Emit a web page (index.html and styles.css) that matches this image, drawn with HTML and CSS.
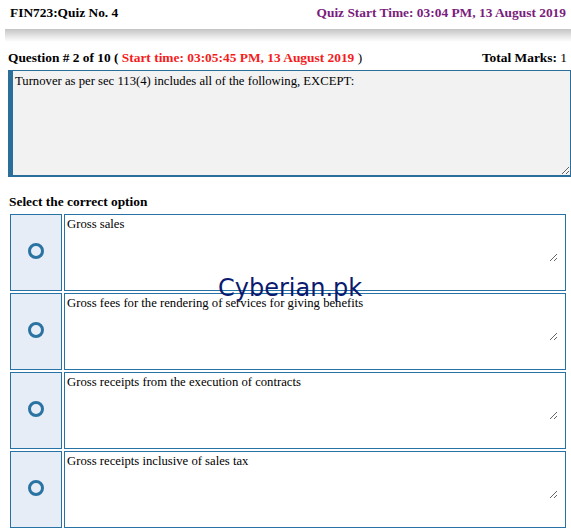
FILE: index.html
```html
<!DOCTYPE html>
<html>
<head>
<meta charset="utf-8">
<link rel="stylesheet" href="styles.css">
</head>
<body>
<header class="top">
  <div class="course">FIN723:Quiz No. 4</div>
  <div class="quiz-time">Quiz Start Time: 03:04 PM, 13 August 2019</div>
</header>
<div class="bar"></div>
<main class="content">
  <div class="qline">
    <div>Question # 2 of 10 ( <span class="red">Start time: 03:05:45 PM, 13 August 2019</span> <span class="paren">)</span></div>
    <div>Total Marks: <span class="normal">1</span></div>
  </div>
  <textarea class="question" readonly>Turnover as per sec 113(4) includes all of the following, EXCEPT:</textarea>
  <div class="select">Select the correct option</div>
  <div class="options">
    <div class="opt">
      <div class="radio"><span class="ring"></span></div>
      <div class="answer"><textarea readonly>Gross sales</textarea></div>
    </div>
    <div class="opt">
      <div class="radio"><span class="ring"></span></div>
      <div class="answer"><textarea readonly>Gross fees for the rendering of services for giving benefits</textarea></div>
    </div>
    <div class="opt">
      <div class="radio"><span class="ring"></span></div>
      <div class="answer"><textarea readonly>Gross receipts from the execution of contracts</textarea></div>
    </div>
    <div class="opt">
      <div class="radio"><span class="ring"></span></div>
      <div class="answer"><textarea readonly>Gross receipts inclusive of sales tax</textarea></div>
    </div>
  </div>
  <div class="watermark">Cyberian.pk</div>
</main>
</body>
</html>
```
FILE: styles.css
```css
html, body {
  margin: 0;
  padding: 0;
  background: #ffffff;
  font-family: "Liberation Serif", "Times New Roman", serif;
  font-size: 13.4px;
  color: #000;
}
.top {
  display: flex;
  justify-content: space-between;
  align-items: flex-start;
  padding: 5px 5px 0 10px;
  height: 24px;
  font-weight: bold;
  line-height: 15px;
}
.quiz-time {
  color: #7a1d7c;
}
.bar {
  margin-left: 5px;
  height: 13px;
  background: linear-gradient(#c4c4c4, #e9e9e9 60%, #ffffff);
}
.content {
  position: relative;
  padding: 8px 0 0 8px;
}
.qline {
  display: flex;
  justify-content: space-between;
  font-weight: bold;
  line-height: 15px;
  padding-right: 4px;
  height: 20px;
}
.red { color: #f51c1c; }
.paren, .normal { font-weight: normal; }
textarea {
  font-family: "Liberation Serif", "Times New Roman", serif;
  font-size: 12.7px;
  color: #000;
  box-sizing: border-box;
  display: block;
  margin: 0;
  outline: none;
}
.question {
  width: 563px;
  height: 107px;
  background: #f2f2f2;
  border: 1px solid #2a6f9c;
  border-bottom-width: 2px;
  border-left: 5px solid #2a6f9c;
  padding: 3px 2px;
  line-height: 15px;
}
.select {
  font-weight: bold;
  margin: 17px 0 0 1px;
  line-height: 15px;
  height: 20px;
}
.options {
  display: flex;
  flex-direction: column;
  gap: 2px;
  padding-left: 2px;
}
.opt {
  display: flex;
  gap: 2px;
  height: 77px;
}
.radio {
  box-sizing: border-box;
  width: 52px;
  height: 77px;
  background: #e6edf7;
  border: 1px solid #2873a6;
  display: flex;
  justify-content: center;
  padding-top: 28px;
}
.ring {
  box-sizing: border-box;
  width: 16px;
  height: 16px;
  border: 3.5px solid #2a73a2;
  border-radius: 50%;
}
.answer {
  box-sizing: border-box;
  width: 502px;
  height: 77px;
  background: #ffffff;
  border: 1px solid #2873a6;
  padding: 0 7px 0 0;
}
.answer textarea {
  width: 100%;
  height: 47px;
  border: none;
  background: transparent;
  padding: 2px 2px;
  line-height: 15px;
}
.watermark {
  position: absolute;
  left: 218px;
  top: 234px;
  font-family: "DejaVu Sans", sans-serif;
  font-size: 24px;
  line-height: 24px;
  color: #0b1a6e;
}
```
